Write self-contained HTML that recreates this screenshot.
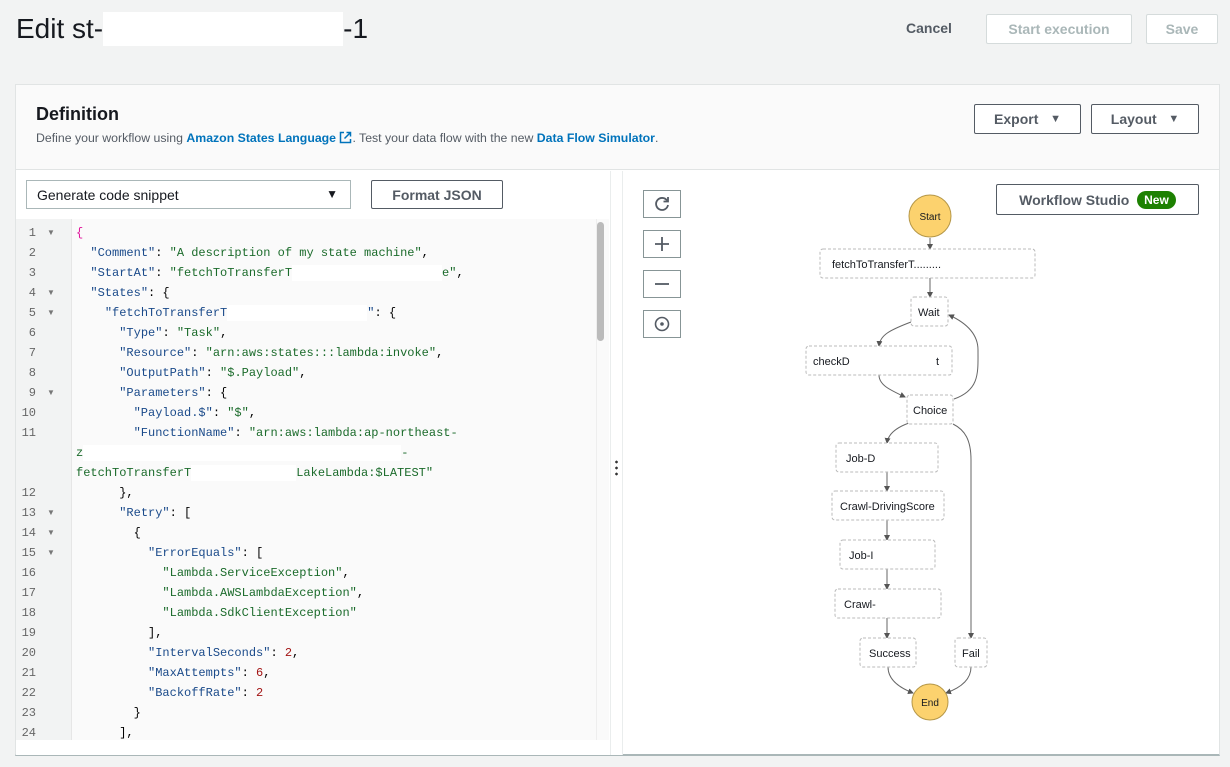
<!DOCTYPE html>
<html><head><meta charset="utf-8"><style>
*{box-sizing:border-box;margin:0;padding:0}
body{width:1230px;height:767px;background:#f2f3f3;font-family:"Liberation Sans",sans-serif;color:#16191f;position:relative;overflow:hidden}
.abs{position:absolute}
.btn{position:absolute;border:1px solid #545b64;border-radius:2px;background:#fff;font-weight:bold;font-size:14px;color:#545b64;display:flex;align-items:center;justify-content:center}
.dis{border-color:#d5dbdb;color:#aab7b8}
.code{position:absolute;left:16px;top:219px;width:580px;height:521px;background:#fafafa;overflow:hidden}
.gut{position:absolute;left:0;top:0;width:56px;height:521px;background:#f2f3f3;border-right:1px solid #e6e6e6}
.ln{position:absolute;font-family:"Liberation Mono",monospace;font-size:12px;line-height:20px;white-space:pre;color:#000}
.num{position:absolute;left:0;width:20px;text-align:right;font-family:"Liberation Mono",monospace;font-size:12px;line-height:20px;color:#666}
.arr{position:absolute;left:31px;font-size:8px;line-height:20px;color:#777}
.k{color:#1a4a8a}.s{color:#1b6b2b}.n{color:#a31515}
.w{background:#fff;display:inline-block;height:16px;vertical-align:middle}
.cb{position:absolute;left:643px;width:38px;height:28px;border:1px solid #879596;background:#fff;display:flex;align-items:center;justify-content:center}
</style></head><body>
<div class="abs" style="left:16px;top:11px;font-size:28px;line-height:36px;color:#16191f">Edit st-<span style="display:inline-block;width:240px;height:34px;background:#fff;vertical-align:top;margin-top:1px"></span>-1</div>
<div class="abs" style="left:906px;top:20px;font-size:14px;font-weight:bold;color:#545b64">Cancel</div>
<div class="btn dis" style="left:986px;top:14px;width:146px;height:30px">Start execution</div>
<div class="btn dis" style="left:1146px;top:14px;width:72px;height:30px">Save</div>

<div class="abs" style="left:15px;top:84px;width:1205px;height:672px;background:#fff;border:1px solid #e1e4e4;border-bottom:2px solid #aab7b8"></div>
<div class="abs" style="left:16px;top:85px;width:1203px;height:85px;background:#fafafa;border-bottom:1px solid #e1e4e4"></div>
<div class="abs" style="left:36px;top:104px;font-size:18px;font-weight:bold">Definition</div>
<div class="abs" style="left:36px;top:131px;font-size:12.3px;color:#545b64">Define your workflow using <b style="color:#0073bb">Amazon States Language</b> <svg width="13" height="13" viewBox="0 0 13 13" style="vertical-align:-2px"><path d="M5 1.5H1.5v10h10V8M7.5 1.5h4v4M11.5 1.5L5.5 7.5" fill="none" stroke="#0073bb" stroke-width="1.5"/></svg>. Test your data flow with the new <b style="color:#0073bb">Data Flow Simulator</b>.</div>
<div class="btn" style="left:974px;top:104px;width:107px;height:30px;color:#545b64">Export&nbsp;&nbsp;&nbsp;<span style="font-size:11px">▼</span></div>
<div class="btn" style="left:1091px;top:104px;width:108px;height:30px;color:#545b64">Layout&nbsp;&nbsp;&nbsp;<span style="font-size:11px">▼</span></div>

<div class="abs" style="left:16px;top:171px;width:594px;height:584px;background:#fff"></div>
<div class="abs" style="left:610px;top:171px;width:13px;height:584px;background:#fff;border-left:1px solid #eaeded;border-right:1px solid #eaeded"></div>
<div class="abs" style="left:615px;top:459px;width:3px;height:18px;background:radial-gradient(circle,#333 1.2px,transparent 1.5px) 0 0/3px 6px"></div>

<div class="abs" style="left:26px;top:180px;width:325px;height:29px;border:1px solid #aab7b8;background:#fff;font-size:14px;padding:6px 10px;color:#16191f">Generate code snippet<span style="position:absolute;right:12px;top:6px;font-size:12px">▼</span></div>
<div class="btn" style="left:371px;top:180px;width:132px;height:29px">Format JSON</div>

<div class="code">
<div class="gut">
<div class="num" style="top:4px">1</div><div class="arr" style="top:4px">▼</div>
<div class="num" style="top:24px">2</div>
<div class="num" style="top:44px">3</div>
<div class="num" style="top:64px">4</div><div class="arr" style="top:64px">▼</div>
<div class="num" style="top:84px">5</div><div class="arr" style="top:84px">▼</div>
<div class="num" style="top:104px">6</div>
<div class="num" style="top:124px">7</div>
<div class="num" style="top:144px">8</div>
<div class="num" style="top:164px">9</div><div class="arr" style="top:164px">▼</div>
<div class="num" style="top:184px">10</div>
<div class="num" style="top:204px">11</div>
<div class="num" style="top:264px">12</div>
<div class="num" style="top:284px">13</div><div class="arr" style="top:284px">▼</div>
<div class="num" style="top:304px">14</div><div class="arr" style="top:304px">▼</div>
<div class="num" style="top:324px">15</div><div class="arr" style="top:324px">▼</div>
<div class="num" style="top:344px">16</div>
<div class="num" style="top:364px">17</div>
<div class="num" style="top:384px">18</div>
<div class="num" style="top:404px">19</div>
<div class="num" style="top:424px">20</div>
<div class="num" style="top:444px">21</div>
<div class="num" style="top:464px">22</div>
<div class="num" style="top:484px">23</div>
<div class="num" style="top:504px">24</div>
</div>
<div style="position:absolute;left:60px;top:4px">
<div class="ln" style="top:0"><span style="color:#e0149c">{</span></div>
<div class="ln" style="top:20px">  <span class="k">"Comment"</span>: <span class="s">"A description of my state machine"</span>,</div>
<div class="ln" style="top:40px">  <span class="k">"StartAt"</span>: <span class="s">"fetchToTransferT<span class="w" style="width:150px"></span>e"</span>,</div>
<div class="ln" style="top:60px">  <span class="k">"States"</span>: {</div>
<div class="ln" style="top:80px">    <span class="k">"fetchToTransferT<span class="w" style="width:140px"></span>"</span>: {</div>
<div class="ln" style="top:100px">      <span class="k">"Type"</span>: <span class="s">"Task"</span>,</div>
<div class="ln" style="top:120px">      <span class="k">"Resource"</span>: <span class="s">"arn:aws:states:::lambda:invoke"</span>,</div>
<div class="ln" style="top:140px">      <span class="k">"OutputPath"</span>: <span class="s">"$.Payload"</span>,</div>
<div class="ln" style="top:160px">      <span class="k">"Parameters"</span>: {</div>
<div class="ln" style="top:180px">        <span class="k">"Payload.$"</span>: <span class="s">"$"</span>,</div>
<div class="ln" style="top:200px">        <span class="k">"FunctionName"</span>: <span class="s">"arn:aws:lambda:ap-northeast-</span></div>
<div class="ln" style="top:220px"><span class="s">z<span class="w" style="width:318px"></span>-</span></div>
<div class="ln" style="top:240px"><span class="s">fetchToTransferT<span class="w" style="width:105px"></span>LakeLambda:$LATEST"</span></div>
<div class="ln" style="top:260px">      },</div>
<div class="ln" style="top:280px">      <span class="k">"Retry"</span>: [</div>
<div class="ln" style="top:300px">        {</div>
<div class="ln" style="top:320px">          <span class="k">"ErrorEquals"</span>: [</div>
<div class="ln" style="top:340px">            <span class="s">"Lambda.ServiceException"</span>,</div>
<div class="ln" style="top:360px">            <span class="s">"Lambda.AWSLambdaException"</span>,</div>
<div class="ln" style="top:380px">            <span class="s">"Lambda.SdkClientException"</span></div>
<div class="ln" style="top:400px">          ],</div>
<div class="ln" style="top:420px">          <span class="k">"IntervalSeconds"</span>: <span class="n">2</span>,</div>
<div class="ln" style="top:440px">          <span class="k">"MaxAttempts"</span>: <span class="n">6</span>,</div>
<div class="ln" style="top:460px">          <span class="k">"BackoffRate"</span>: <span class="n">2</span></div>
<div class="ln" style="top:480px">        }</div>
<div class="ln" style="top:500px">      ],</div>
</div>
</div>
<div class="abs" style="left:596px;top:219px;width:13px;height:521px;background:#fafafa;border-left:1px solid #eee"></div>
<div class="abs" style="left:597px;top:222px;width:7px;height:119px;background:#bbb;border-radius:4px"></div>

<div class="cb" style="top:190px"><svg width="18" height="18" viewBox="0 0 18 18"><path d="M14 5.5A6 6 0 1 0 15 10" fill="none" stroke="#545b64" stroke-width="1.8"/><path d="M15 2v4.5h-4.5" fill="none" stroke="#545b64" stroke-width="1.8"/></svg></div>
<div class="cb" style="top:230px"><svg width="18" height="18"><path d="M9 2v14M2 9h14" stroke="#545b64" stroke-width="1.8"/></svg></div>
<div class="cb" style="top:270px"><svg width="18" height="18"><path d="M2 9h14" stroke="#545b64" stroke-width="1.8"/></svg></div>
<div class="cb" style="top:310px"><svg width="18" height="18"><circle cx="9" cy="9" r="6.5" fill="none" stroke="#545b64" stroke-width="1.6"/><circle cx="9" cy="9" r="1.8" fill="#545b64"/></svg></div>

<div class="btn" style="left:996px;top:184px;width:203px;height:31px;font-size:14px">Workflow Studio&nbsp;&nbsp;<span style="background:#1d8102;color:#fff;border-radius:10px;padding:2px 7px;font-size:12px">New</span></div>

<svg class="abs" style="left:0;top:0" width="1230" height="767" font-family="Liberation Sans,sans-serif" font-size="11">
<defs><marker id="a" markerWidth="6" markerHeight="6" refX="5" refY="3" orient="auto"><path d="M0 0L6 3L0 6z" fill="#555"/></marker></defs>
<g fill="none" stroke="#666" stroke-width="1" marker-end="url(#a)">
<path d="M930 238V249"/>
<path d="M930 278V297"/>
<path d="M911 322C890 330 880 335 879 346"/>
<path d="M879 375C879 385 890 390 905 397"/>
<path d="M954 399C980 390 978 372 978 350C978 330 960 320 949 315"/>
<path d="M909 423C895 428 888 435 887 443"/>
<path d="M887 472V491"/>
<path d="M887 520V540"/>
<path d="M887 569V589"/>
<path d="M887 618V638"/>
<path d="M953 424C965 430 971 440 971 460V638"/>
<path d="M888 667C888 680 900 688 913 693"/>
<path d="M971 667C971 680 960 688 946 693"/>
</g>
<g fill="#fff" stroke="#bbb" stroke-dasharray="3 2">
<rect x="820" y="249" width="215" height="29" rx="3"/>
<rect x="911" y="297" width="37" height="29" rx="3"/>
<rect x="806" y="346" width="146" height="29" rx="3"/>
<rect x="907" y="395" width="46" height="29" rx="3"/>
<rect x="836" y="443" width="102" height="29" rx="3"/>
<rect x="832" y="491" width="112" height="29" rx="3"/>
<rect x="840" y="540" width="95" height="29" rx="3"/>
<rect x="835" y="589" width="106" height="29" rx="3"/>
<rect x="860" y="638" width="56" height="29" rx="3"/>
<rect x="955" y="638" width="32" height="29" rx="3"/>
</g>
<circle cx="930" cy="216" r="21" fill="#fcd26e" stroke="#b59748"/>
<circle cx="930" cy="702" r="18" fill="#fcd26e" stroke="#b59748"/>
<g fill="#16191f">
<text x="930" y="220" text-anchor="middle" font-size="10">Start</text>
<text x="930" y="706" text-anchor="middle" font-size="10">End</text>
<text x="832" y="268">fetchToTransferT.........</text>
<text x="918" y="316">Wait</text>
<text x="813" y="365">checkD</text><text x="936" y="365">t</text>
<text x="913" y="414">Choice</text>
<text x="846" y="462">Job-D</text>
<text x="840" y="510">Crawl-DrivingScore</text>
<text x="849" y="559">Job-I</text>
<text x="844" y="608">Crawl-</text>
<text x="869" y="657">Success</text>
<text x="962" y="657">Fail</text>
</g>
</svg>
</body></html>
